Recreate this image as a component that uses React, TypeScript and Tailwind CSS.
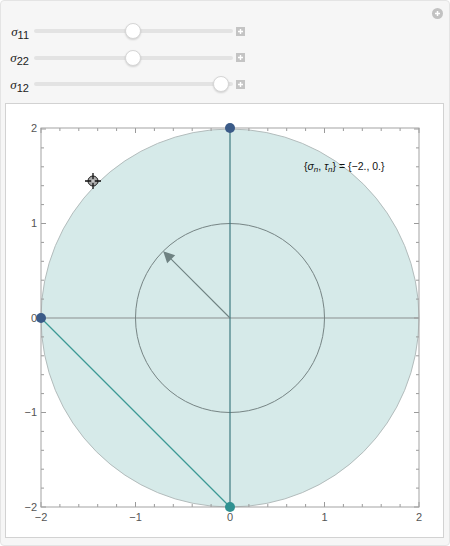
import React from 'react';

const CX = 230;
const CY = 318;
const S = 94.5;

const px = (x: number) => CX + x * S;
const py = (y: number) => CY - y * S;

const Sigma = ({ sub }: { sub: string }) => (
  <span className="text-[13px] text-[#222] leading-none whitespace-nowrap">
    <span className="italic" style={{ fontFamily: '"Liberation Serif", serif' }}>σ</span>
    <span className="text-[11px] relative top-[3px]" style={{ fontFamily: '"Liberation Sans", sans-serif' }}>{sub}</span>
  </span>
);

const PlusBox = () => (
  <div className="w-[9px] h-[9px] bg-[#c4c4c4] flex items-center justify-center">
    <svg width="7" height="7" viewBox="0 0 7 7">
      <path d="M3.5 1v5M1 3.5h5" stroke="#fff" strokeWidth="1.4" />
    </svg>
  </div>
);

const SliderRow = ({ sub, pos }: { sub: string; pos: number }) => (
  <div className="flex items-center h-[26.5px]">
    <div className="w-[29px] pr-[5px] flex justify-end">
      <Sigma sub={sub} />
    </div>
    <div className="relative w-[199px] h-[4px] rounded-full bg-[#e3e3e3]">
      <div
        className="absolute top-1/2 w-[16px] h-[16px] -translate-x-1/2 -translate-y-1/2 rounded-full bg-white border border-[#d6d6d6] shadow-[0_1px_2px_rgba(0,0,0,0.15)]"
        style={{ left: pos }}
      />
    </div>
    <div className="ml-[3px]">
      <PlusBox />
    </div>
  </div>
);

const ticks = () => {
  const out: React.ReactNode[] = [];
  for (let i = -10; i <= 10; i++) {
    const v = i / 5;
    const major = i % 5 === 0;
    const L = major ? 5 : 3;
    const x = px(v);
    const y = py(v);
    out.push(<line key={`b${i}`} x1={x} y1={507} x2={x} y2={507 - L} />);
    out.push(<line key={`t${i}`} x1={x} y1={128} x2={x} y2={128 + L} />);
    out.push(<line key={`l${i}`} x1={41} y1={y} x2={41 + L} y2={y} />);
    out.push(<line key={`r${i}`} x1={419} y1={y} x2={419 - L} y2={y} />);
  }
  return out;
};

const Plot = () => {
  const ax = px(-Math.SQRT1_2);
  const ay = py(Math.SQRT1_2);
  return (
    <svg width="437" height="433" viewBox="6 104 437 433" className="block">
      <circle cx={CX} cy={CY} r={2 * S} fill="#d6eae9" stroke="#b3bcbc" strokeWidth="1" />
      <line x1={41} y1={CY} x2={419} y2={CY} stroke="#8a8f8f" strokeWidth="1" />
      <circle cx={CX} cy={CY} r={S} fill="none" stroke="#768484" strokeWidth="1" />
      <line x1={CX} y1={128} x2={CX} y2={507} stroke="#3e7a80" strokeWidth="1.2" />
      <line x1={41} y1={CY} x2={CX} y2={507} stroke="#3d9a94" strokeWidth="1.2" />
      <line x1={CX} y1={CY} x2={ax + 6} y2={ay + 6} stroke="#6f8282" strokeWidth="1.1" />
      <polygon
        points={`${ax},${ay} ${ax + 12},${ay + 4} ${ax + 4},${ay + 12}`}
        fill="#6f8282"
      />
      <g stroke="#9a9a9a" strokeWidth="1">{ticks()}</g>
      <rect x={41} y={128} width={378} height={379} fill="none" stroke="#a3a3a3" strokeWidth="1" />
      <circle cx={CX} cy={128} r={5} fill="#3b5b88" />
      <circle cx={41} cy={CY} r={5} fill="#3b5b88" />
      <circle cx={CX} cy={507} r={5} fill="#2f9191" />
      <g fontFamily='"Liberation Sans", sans-serif' fontSize="11" fill="#555">
        <text x={37} y={132} textAnchor="end">2</text>
        <text x={37} y={227} textAnchor="end">1</text>
        <text x={37} y={322} textAnchor="end">0</text>
        <text x={37} y={416} textAnchor="end">−1</text>
        <text x={37} y={511} textAnchor="end">−2</text>
        <text x={px(-2)} y={521} textAnchor="middle">−2</text>
        <text x={px(-1)} y={521} textAnchor="middle">−1</text>
        <text x={px(0)} y={521} textAnchor="middle">0</text>
        <text x={px(1)} y={521} textAnchor="middle">1</text>
        <text x={px(2)} y={521} textAnchor="middle">2</text>
      </g>
      <text x={304} y={170} fontFamily='"Liberation Sans", sans-serif' fontSize="10.5" fill="#111">
        {'{'}
        <tspan fontStyle="italic">σ</tspan>
        <tspan fontStyle="italic" fontSize="8" dy="2">n</tspan>
        <tspan dy="-2">, </tspan>
        <tspan fontStyle="italic">τ</tspan>
        <tspan fontStyle="italic" fontSize="8" dy="2">n</tspan>
        <tspan dy="-2">{'} = {−2., 0.}'}</tspan>
      </text>
      <g>
        <circle cx={93} cy={181} r={5} fill="#a8a8a8" stroke="#222" strokeWidth="1" />
        <path d="M93 173v16M85 181h16" stroke="#111" strokeWidth="1.3" />
        <path d="M93 179v4M91 181h4" stroke="#fff" strokeWidth="1" />
      </g>
    </svg>
  );
};

export default function App() {
  return (
    <div
      className="w-[450px] h-[546px] flex flex-col px-[4px] bg-[#f6f6f6] border border-[#e4e4e4] rounded-[4px] overflow-hidden"
      style={{ fontFamily: '"Liberation Sans", sans-serif' }}
    >
      <div className="h-[17px] pt-[7px] pr-[2px] flex justify-end">
        <div className="w-[11px] h-[11px] rounded-full bg-[#c2c2c2] flex items-center justify-center">
          <svg width="7" height="7" viewBox="0 0 7 7">
            <path d="M3.5 1v5M1 3.5h5" stroke="#fff" strokeWidth="1.5" />
          </svg>
        </div>
      </div>
      <div className="flex flex-col">
        <SliderRow sub="11" pos={99} />
        <SliderRow sub="22" pos={99} />
        <SliderRow sub="12" pos={187} />
      </div>
      <div className="mt-[5.5px] w-[439px] h-[435px] bg-white border border-[#d2d2d2]">
        <Plot />
      </div>
    </div>
  );
}
